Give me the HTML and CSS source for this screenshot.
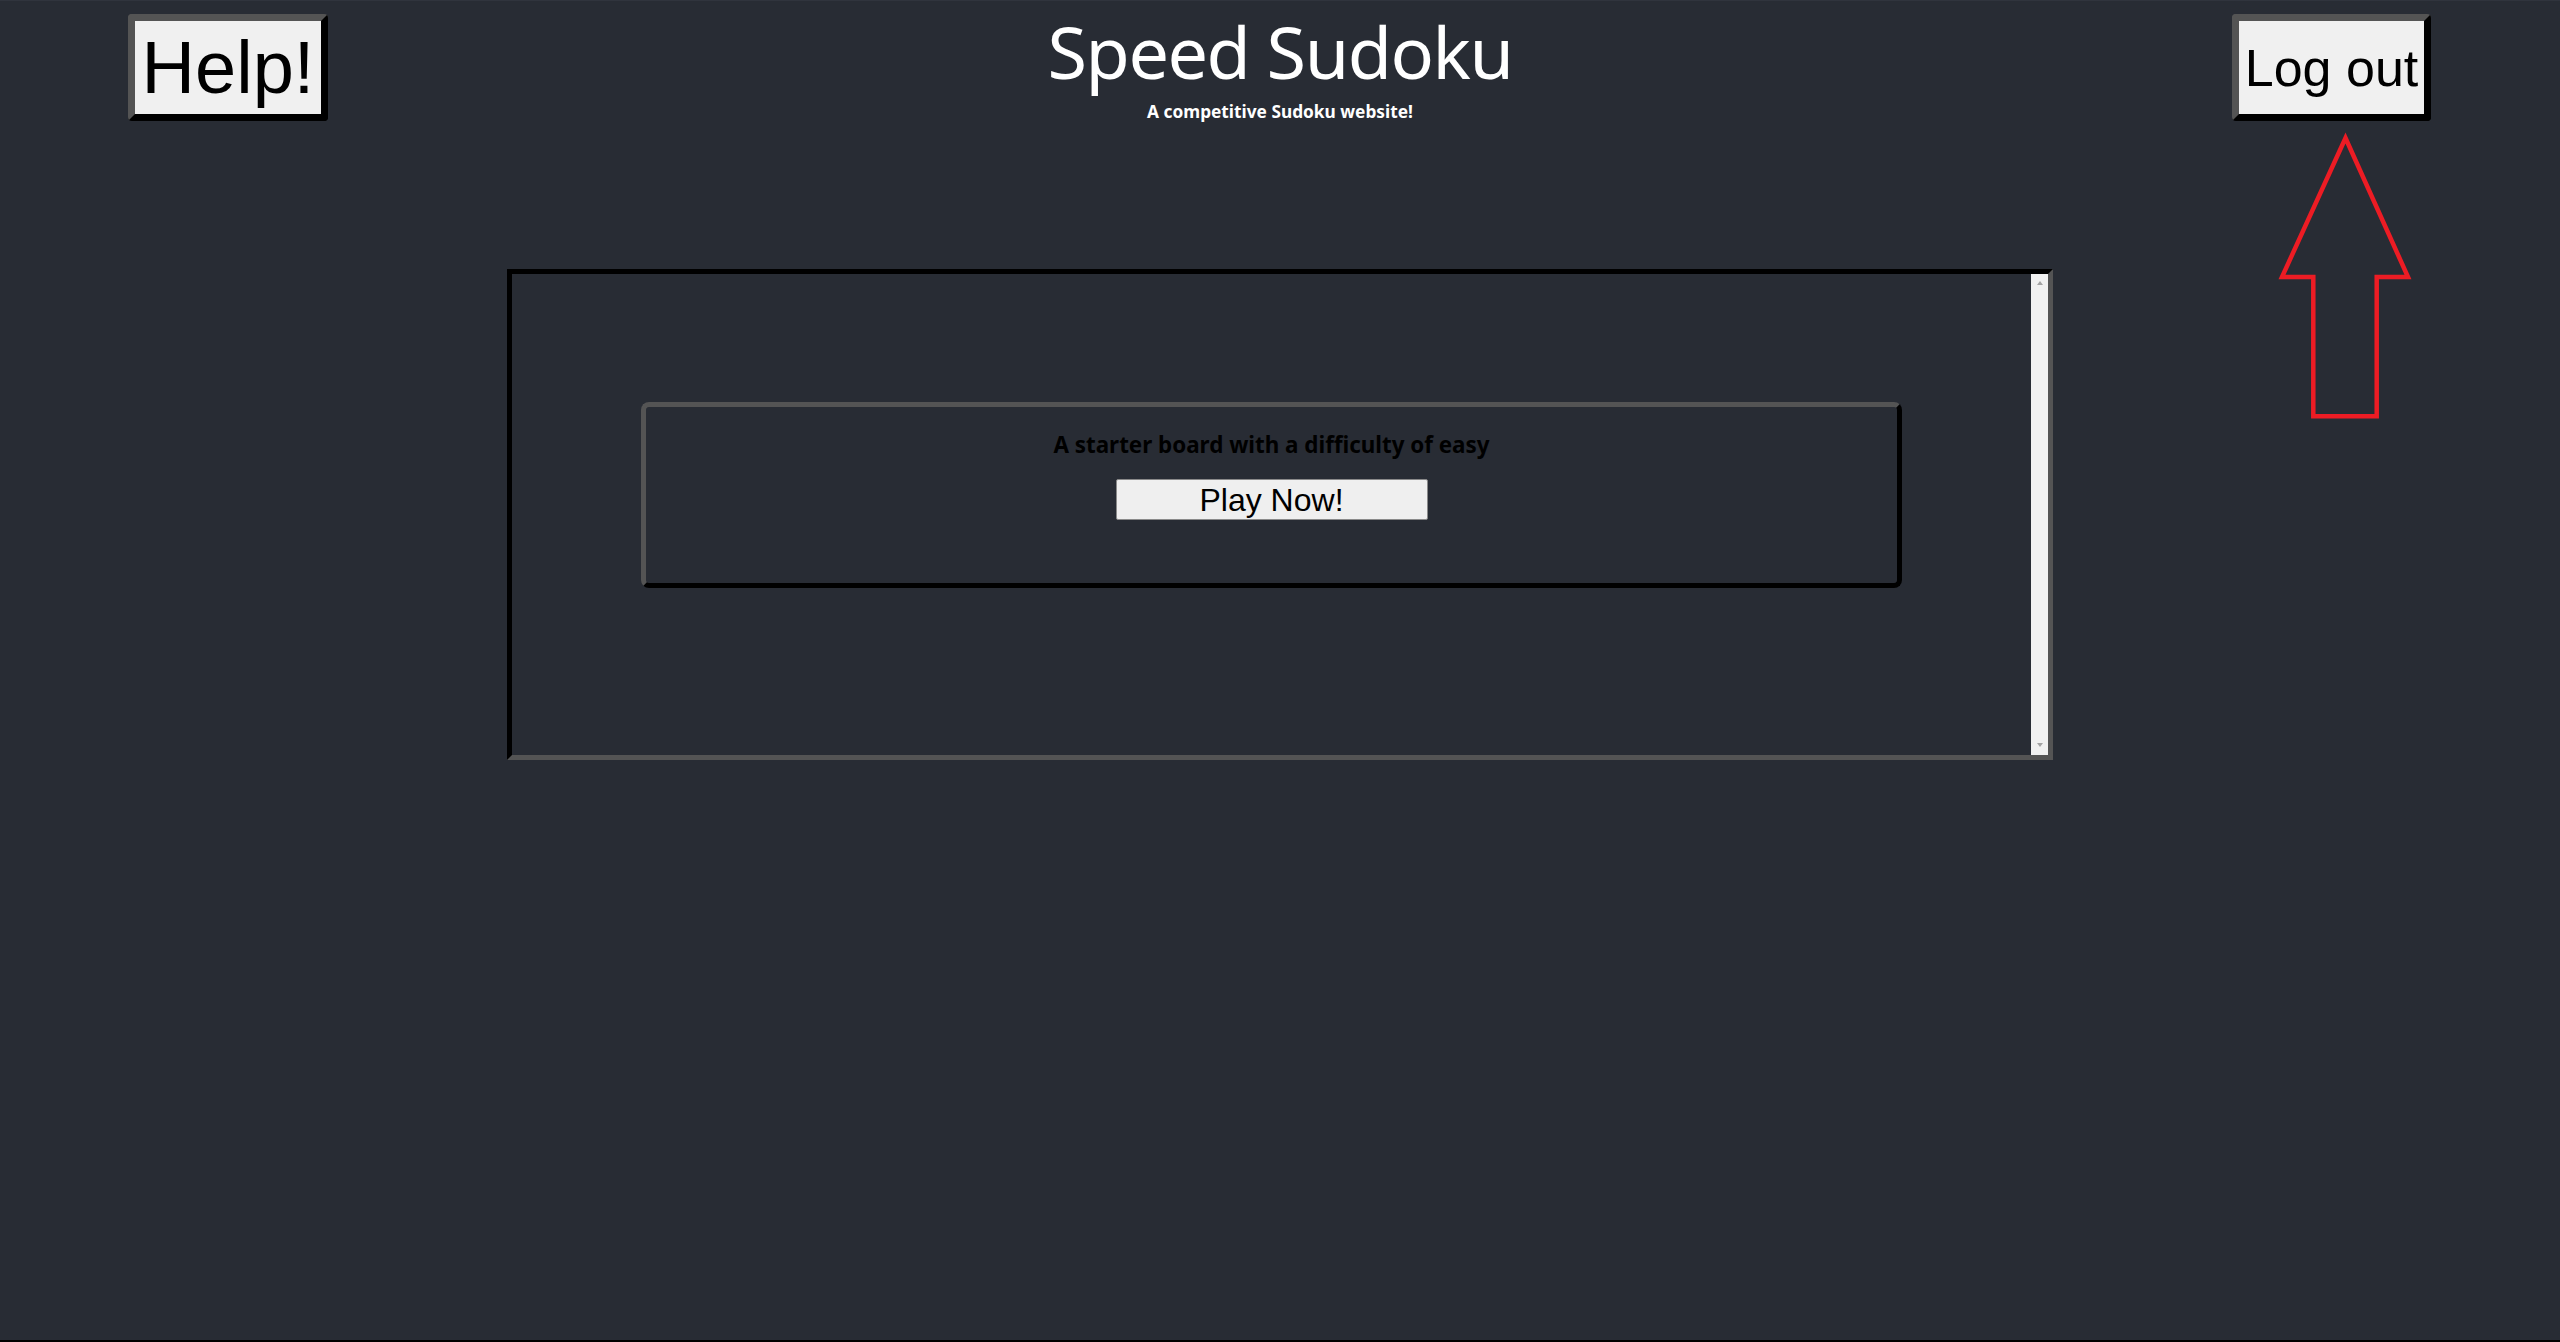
FILE: index.html
```html
<!DOCTYPE html>
<html lang="en">
<head>
<meta charset="utf-8">
<title>Speed Sudoku</title>
<link rel="stylesheet" href="styles.css">
</head>
<body>
<div class="page">
  <header class="topbar">
    <button class="btn-help">Help!</button>
    <div class="brand">
      <h1 class="brand-title">Speed Sudoku</h1>
      <p class="brand-sub">A competitive Sudoku website!</p>
    </div>
    <button class="btn-logout">Log out</button>
  </header>
  <svg class="arrow" width="140" height="292" viewBox="0 0 140 292" aria-hidden="true">
    <polygon points="69.5,7 132,146 100.7,146 100.7,285.3 37.3,285.3 37.3,146 6,146" fill="none" stroke="#ed1c24" stroke-width="4.5" stroke-linejoin="miter"/>
  </svg>
  <main class="board">
    <div class="board-content">
      <section class="card">
        <p class="card-text">A starter board with a difficulty of easy</p>
        <button class="btn-play">Play Now!</button>
      </section>
    </div>
    <div class="scrollbar" aria-hidden="true">
      <span class="scroll-up"></span>
      <span class="scroll-down"></span>
    </div>
  </main>
</div>
</body>
</html>
```
FILE: styles.css
```css
html {
  background: #000;
}
body {
  margin: 0;
}
.page {
  position: relative;
  height: 1339px;
  background: #282c34;
  border-top: 1px solid #30343d;
}
.topbar {
  display: flex;
  justify-content: space-between;
  align-items: flex-start;
  padding: 13px 129px 0 128px;
}
.btn-help,
.btn-logout {
  box-sizing: border-box;
  height: 107px;
  padding: 0;
  border: 7px solid;
  border-color: #545454 #000 #000 #545454;
  border-radius: 4px;
  background: #f0f0f0;
  color: #000;
  font-family: "Liberation Sans", Arial, sans-serif;
  line-height: 1;
}
.btn-help {
  width: 200px;
  font-size: 74px;
}
.btn-logout {
  width: 199px;
  font-size: 52px;
}
.brand {
  text-align: center;
  color: #fff;
  font-family: "Noto Sans", sans-serif;
}
.brand-title {
  margin: 0;
  font-size: 72px;
  font-weight: 400;
  letter-spacing: -1.5px;
  line-height: 1;
  padding-top: 1px;
}
.brand-sub {
  margin: 16px 0 0;
  font-size: 17.3px;
  font-weight: 700;
  line-height: 1;
}
.arrow {
  position: absolute;
  left: 2276px;
  top: 130px;
}
.board {
  display: flex;
  width: 1536px;
  height: 481px;
  margin: 148px auto 0;
  border: 5px solid;
  border-color: #000 #545454 #545454 #000;
}
.board-content {
  flex: 1;
  min-width: 0;
}
.scrollbar {
  width: 17px;
  background: #f1f1f1;
  display: flex;
  flex-direction: column;
  justify-content: space-between;
  align-items: center;
  padding: 7px 0 8px;
  box-sizing: border-box;
}
.scroll-up,
.scroll-down {
  width: 0;
  height: 0;
  border-left: 3.5px solid transparent;
  border-right: 3.5px solid transparent;
}
.scroll-up {
  border-bottom: 4px solid #a3a3a3;
}
.scroll-down {
  border-top: 4px solid #a3a3a3;
}
.card {
  box-sizing: border-box;
  width: 1261px;
  height: 186px;
  margin: 128px auto 0;
  border: 5px solid;
  border-color: #545454 #000 #000 #545454;
  border-radius: 8px;
  display: flex;
  flex-direction: column;
  align-items: center;
}
.card-text {
  margin: 23px 0 0;
  color: #000;
  font-family: "Noto Sans", sans-serif;
  font-size: 22.4px;
  font-weight: 700;
  line-height: 1.3;
}
.btn-play {
  box-sizing: border-box;
  width: 312px;
  height: 41px;
  margin-top: 20px;
  padding: 0;
  border: 1px solid #8a8a8a;
  border-radius: 2px;
  background: #efefef;
  color: #000;
  font-family: "Liberation Sans", Arial, sans-serif;
  font-size: 32px;
  line-height: 1;
}
```
